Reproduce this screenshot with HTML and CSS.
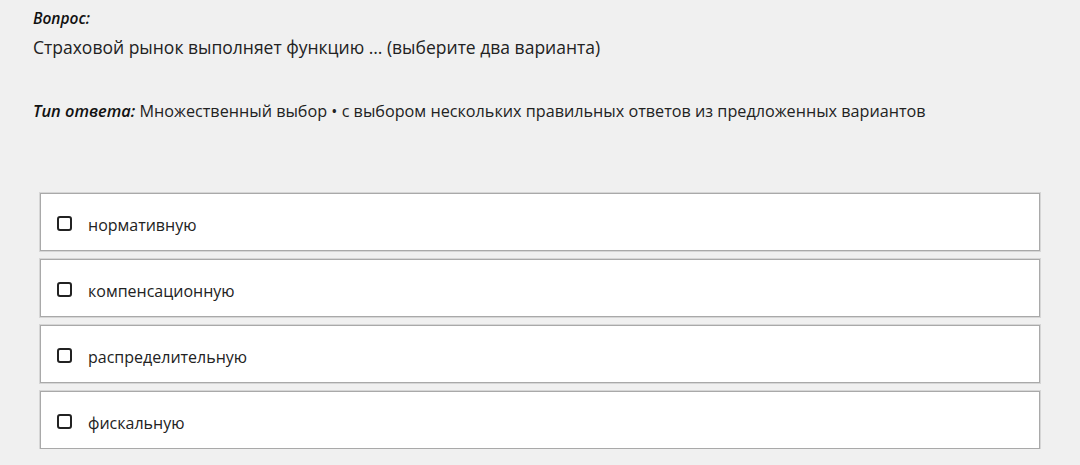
FILE: index.html
```html
<!DOCTYPE html>
<html lang="ru">
  <head>
    <meta charset="UTF-8" />
    <meta name="viewport" content="width=device-width, initial-scale=1.0" />
    <title>Вопрос</title>
    <link rel="stylesheet" href="styles.css">
  </head>
  <body>
    <div class="container">
      <div class="question">
        <div class="label">Вопрос:</div>
        <div class="text">Страховой рынок выполняет функцию … (выберите два варианта)</div>
      </div>

      <div class="answer-type">
        <span class="label">Тип ответа:</span>
        Множественный выбор • с выбором нескольких правильных ответов из предложенных вариантов
      </div>

      <div class="options">
        <label class="option">
          <span class="checkbox"></span>
          <span class="option-text">нормативную</span>
        </label>
        <label class="option">
          <span class="checkbox"></span>
          <span class="option-text">компенсационную</span>
        </label>
        <label class="option">
          <span class="checkbox"></span>
          <span class="option-text">распределительную</span>
        </label>
        <label class="option">
          <span class="checkbox"></span>
          <span class="option-text">фискальную</span>
        </label>
      </div>
    </div>
  </body>
</html>
```

FILE: styles.css
```css
* {
  box-sizing: border-box;
}

html,
body {
  margin: 0;
  padding: 0;
}

body {
  background: #f0f0f0;
  color: #222;
  font-family: "Open Sans", "Noto Sans", Arial, sans-serif;
  font-size: 16px;
}

.container {
  padding: 6px 33px 0;
}

.label {
  font-style: italic;
  font-weight: 600;
  font-size: 15.5px;
  color: #111;
}

.question .label {
  line-height: 24px;
}

.question .text {
  font-size: 17.5px;
  line-height: 34px;
}

.answer-type {
  margin-top: 35px;
  line-height: 24px;
  font-size: 16.2px;
}

.answer-type .label {
  font-size: 16.4px;
}

.options {
  margin: 70px 0 0 7px;
  width: 1000px;
  display: flex;
  flex-direction: column;
  gap: 8px;
}

.option {
  display: flex;
  align-items: center;
  gap: 16px;
  height: 58px;
  padding: 5px 0 0 16px;
  background: #fff;
  border: 1px solid #a9a9a9;
  box-shadow: 0 0 0 1px #d6d6d6;
}

.checkbox {
  width: 15px;
  height: 15px;
  border: 2px solid #222;
  border-radius: 3px;
  margin-top: -2px;
}
```
